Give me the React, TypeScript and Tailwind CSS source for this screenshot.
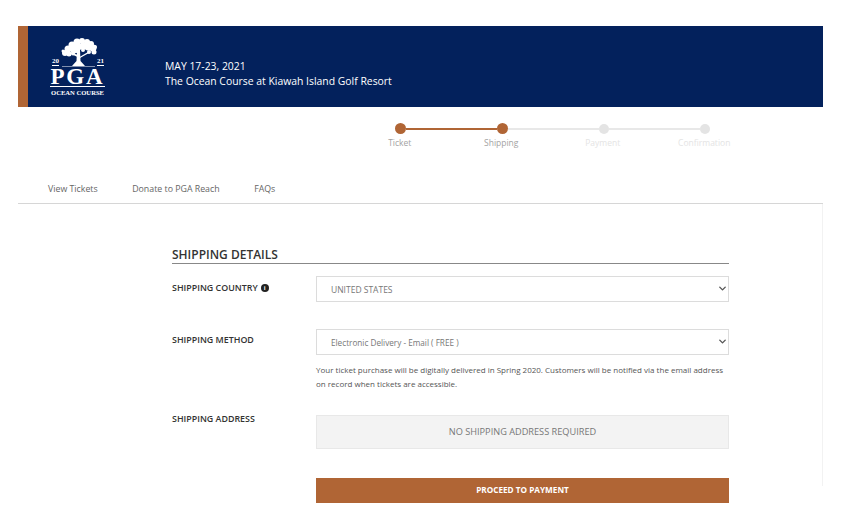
import { ChevronDown } from 'lucide-react';

const steps = [
  { label: 'Ticket', labelClass: 'text-[#a3a3a3]' },
  { label: 'Shipping', labelClass: 'text-[#a3a3a3]' },
  { label: 'Payment', labelClass: 'text-[#e4e4e4]' },
  { label: 'Confirmation', labelClass: 'text-[#e4e4e4]' }
];

// canopy blobs of the oak in the logo: [cx, cy, r]
const canopy = [
  [5, 15, 3], [8, 11, 3.5], [9, 16, 2.5], [12, 7, 3.5], [14, 12, 3.5], [17, 4, 3.5], [18, 9, 3.5],
  [22, 3, 3], [23, 8, 3.5], [27, 4, 3], [28, 9, 3.5], [31, 6, 3], [33, 10, 3.5], [34, 14, 2.5], [29, 14, 2],
  [13, 15.5, 2], [17, 13, 2], [23, 12, 2], [3, 13, 1.5], [35, 9, 2]
];

function Logo() {
  return (
    <div className="flex w-[55px] flex-col items-center text-white [font-family:'Liberation_Serif',serif]">
      <svg width="37" height="29" viewBox="0 0 37 29" fill="white" className="ml-[2px]">
        {canopy.map(([cx, cy, r]) => (
          <circle key={`${cx}-${cy}`} cx={cx} cy={cy} r={r} />
        ))}
        <path d="M17 12 L20 12 L20.5 23 L25 28 L12 28 L16.5 23 Z" />
        <path d="M17.5 19 L9 15 L10 14 L18 17 Z M19.5 19 L28 14 L29 15 L20 20 Z" />
        <path d="M2 28 H35 V29 H2 Z" opacity="0.5" />
      </svg>
      <div className="-mt-[9px] flex h-[8px] w-full justify-between pl-[2px] pr-[1px] text-[7px] font-bold leading-[7px]">
        <span className="border-b border-white">20</span>
        <span className="border-b border-white">21</span>
      </div>
      <div className="mt-[3px] whitespace-nowrap text-[23px] font-bold leading-[15px] tracking-[1.8px]">PGA</div>
      <div className="mt-[2px] w-full border-t border-white pt-[2px] text-center text-[6.6px] font-bold leading-[7px] whitespace-nowrap">
        OCEAN COURSE
      </div>
    </div>
  );
}

function Stepper() {
  return (
    <div className="ml-[331px] w-[406px]">
      <div className="flex h-[11px] items-center px-[45.5px]">
        <div className="h-[11px] w-[11px] shrink-0 rounded-full bg-[#b06535]" />
        <div className="h-[2px] flex-1 bg-[#b06535]" />
        <div className="h-[11px] w-[11px] shrink-0 rounded-full bg-[#b06535]" />
        <div className="h-[2px] flex-1 bg-[#e8e8e8]" />
        <div className="h-[10px] w-[10px] shrink-0 rounded-full bg-[#e4e4e4]" />
        <div className="h-[2px] flex-1 bg-[#e8e8e8]" />
        <div className="h-[10px] w-[10px] shrink-0 rounded-full bg-[#e4e4e4]" />
      </div>
      <div className="mt-[3px] flex">
        {steps.map((step) => (
          <div key={step.label} className={`w-[101.5px] text-center text-[8.5px] leading-[12px] ${step.labelClass}`}>
            {step.label}
          </div>
        ))}
      </div>
    </div>
  );
}

function SelectBox({ value, textClass }: { value: string; textClass: string }) {
  return (
    <div className="relative h-[26px] w-full overflow-hidden border border-[#dcdcdc] bg-white">
      <select
        defaultValue={value}
        className={`h-full w-full -translate-y-[2px] appearance-none bg-transparent pl-[14px] text-[#777777] outline-none ${textClass}`}
      >
        <option>{value}</option>
      </select>
      <ChevronDown size={11} strokeWidth={3} className="pointer-events-none absolute right-0 top-[6px] text-[#555555]" />
    </div>
  );
}

export default function App() {
  return (
    <div className="min-h-[528px] bg-white pl-[18px] pt-[26px] [font-family:'Open_Sans',sans-serif]">
      <div className="w-[805px]">
        <header className="flex h-[81px] bg-[#03215c]">
          <div className="w-[10px] bg-[#b06535]" />
          <div className="ml-[22px] pt-[12px]">
            <Logo />
          </div>
          <div className="ml-[60px] pt-[33px] text-[10.4px] leading-[15px] text-white">
            <div>MAY 17-23, 2021</div>
            <div>The Ocean Course at Kiawah Island Golf Resort</div>
          </div>
        </header>

        <div className="pt-[16px]">
          <Stepper />
        </div>

        <nav className="mt-[32px] flex h-[23px] gap-[34.5px] border-b border-[#d6d6d6] pl-[30px] pt-[2px] text-[8.8px] leading-[12px] text-[#666666]">
          <a>View Tickets</a>
          <a>Donate to PGA Reach</a>
          <a>FAQs</a>
        </nav>

        <main className="h-[282px] border-r border-[#f2f2f2] pl-[154px] pt-[42px]">
          <div className="w-[557px]">
            <h2 className="border-b border-[#888888] text-[12px] font-semibold leading-[17px] text-[#333333]">
              SHIPPING DETAILS
            </h2>

            <div className="mt-[12px] flex">
              <div className="flex w-[144px] items-center gap-[3px] self-start pt-[6px] text-[8.9px] font-semibold leading-[12px] text-[#333333]">
                SHIPPING COUNTRY
                <span className="flex h-[8px] w-[8px] items-center justify-center rounded-full bg-[#222222] text-[6px] font-bold leading-none text-white">
                  i
                </span>
              </div>
              <div className="w-[413px]">
                <SelectBox value="UNITED STATES" textClass="text-[8.5px]" />
              </div>
            </div>

            <div className="mt-[27px] flex">
              <div className="w-[144px] pt-[5px] text-[8.9px] font-semibold leading-[12px] text-[#333333]">
                SHIPPING METHOD
              </div>
              <div className="w-[413px]">
                <SelectBox value="Electronic Delivery - Email ( FREE )" textClass="text-[8.2px]" />
                <p className="mt-[8px] text-[8px] leading-[14px] text-[#555555]">
                  Your ticket purchase will be digitally delivered in Spring 2020. Customers will be notified via the email address on record when tickets are accessible.
                </p>
              </div>
            </div>

            <div className="mt-[24px] flex">
              <div className="-mt-[2px] w-[144px] text-[8.9px] font-semibold leading-[12px] text-[#333333]">
                SHIPPING ADDRESS
              </div>
              <div className="flex h-[34px] w-[413px] items-center justify-center border border-[#e8e8e8] bg-[#f3f3f3] text-[9.2px] text-[#777777]">
                NO SHIPPING ADDRESS REQUIRED
              </div>
            </div>

            <div className="mt-[29px] pl-[144px]">
              <button className="block h-[25px] w-[413px] bg-[#b06535] text-[8.2px] font-bold text-white">
                PROCEED TO PAYMENT
              </button>
            </div>
          </div>
        </main>
      </div>
    </div>
  );
}
